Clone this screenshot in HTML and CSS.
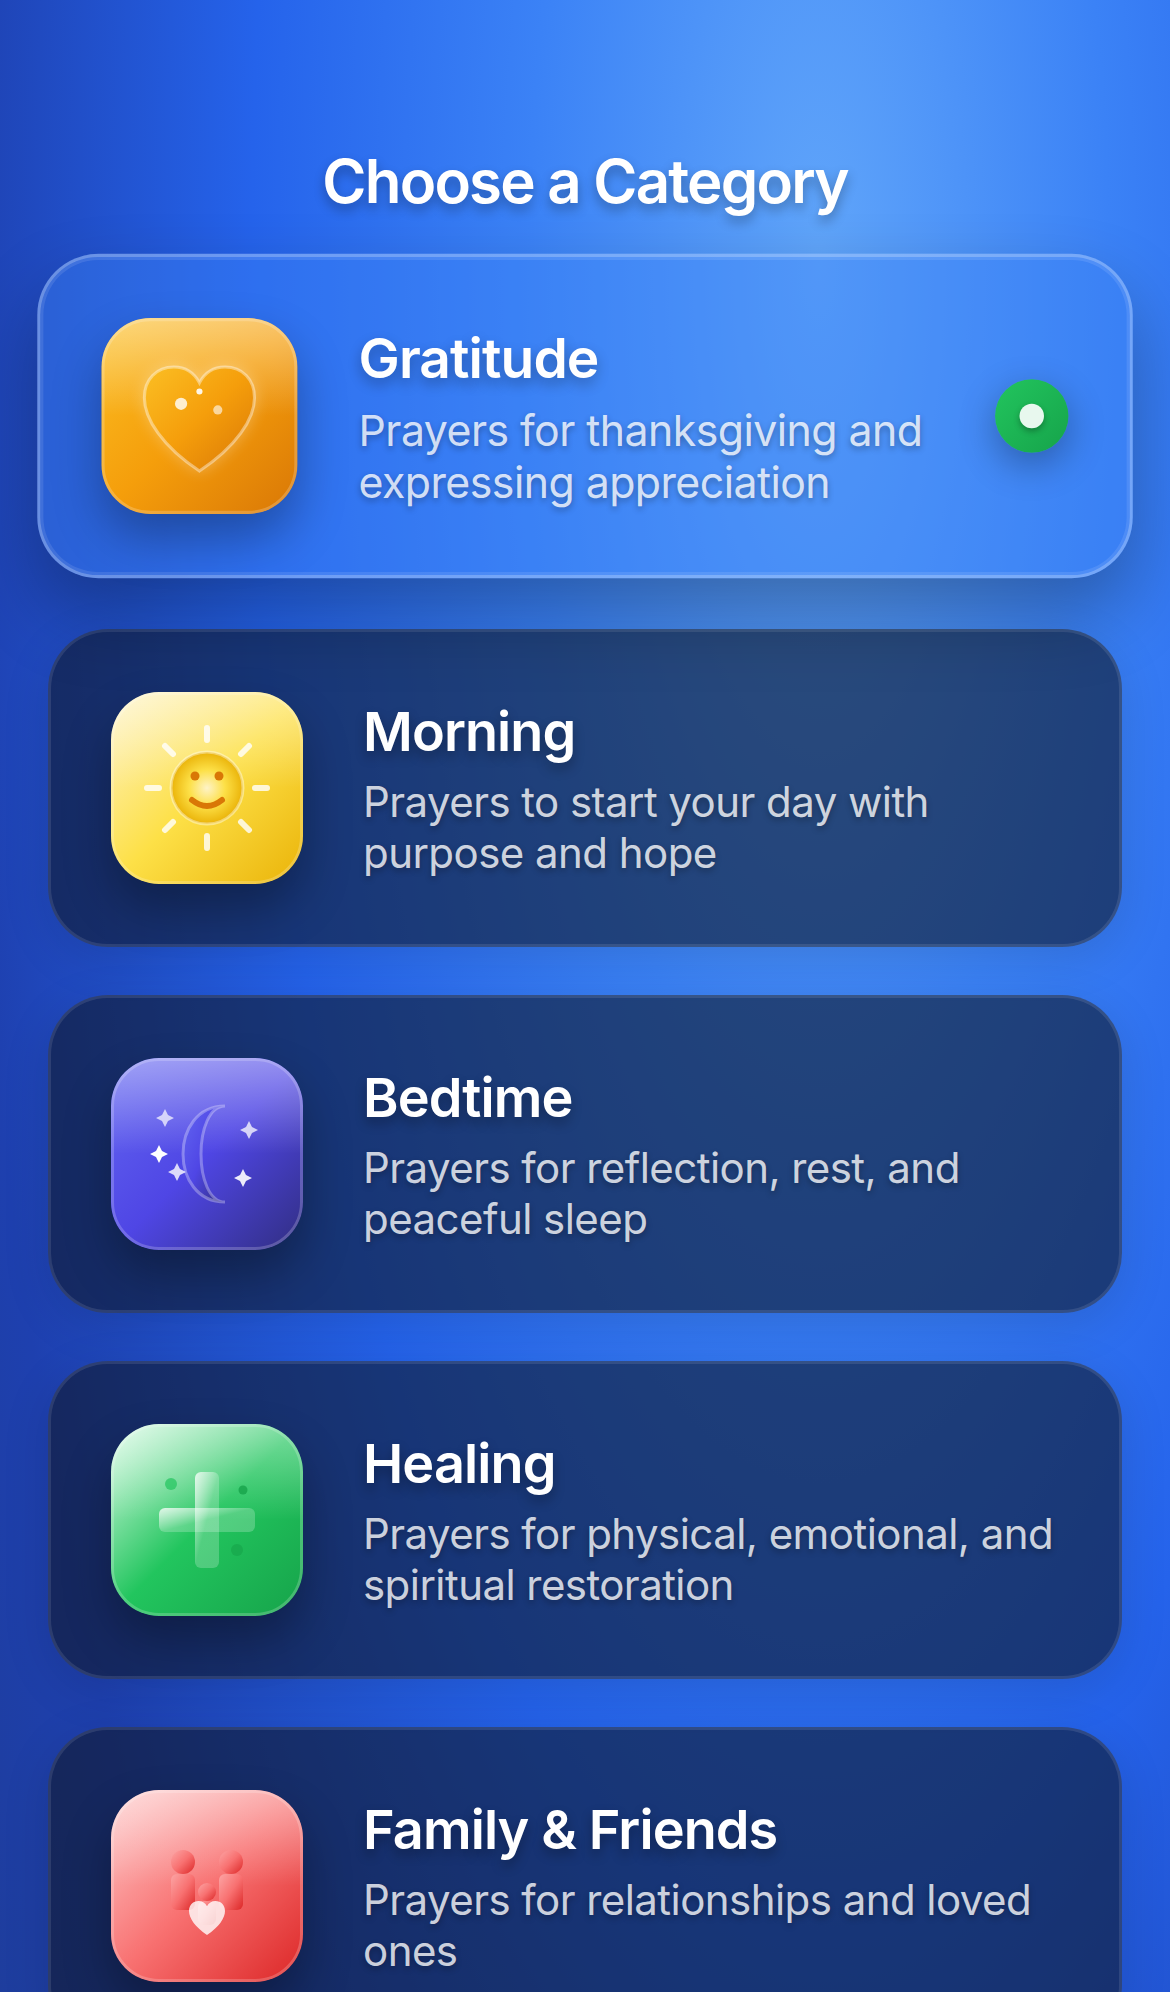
FILE: index.html
```html
<!DOCTYPE html>
<html lang="en">
<head>
<meta charset="utf-8">
<title>Choose a Category</title>
<link rel="stylesheet" href="styles.css">
</head>
<body>
<main class="screen">
  <h1 class="heading">Choose a Category</h1>
  <div class="list">
    <article class="card selected">
      <div class="icon gratitude">
        <svg viewBox="0 0 192 192">
          <defs><linearGradient id="gh" x1="0" y1="0" x2="1" y2="1"><stop offset="0" stop-color="#fbbf24"/><stop offset=".5" stop-color="#f59e0b"/><stop offset="1" stop-color="#d97706"/></linearGradient></defs>
          <path class="glow" fill="url(#gh)" stroke="#fff" stroke-opacity=".4" stroke-width="3" d="M96 150C60 126 42 99 42 78C42 60 54 48 71 48C82 48 91 54 96 63.500C101 54 110 48 121 48C138 48 150 60 150 78C150 99 132 126 96 150Z"/>
          <circle cx="78" cy="84" r="6" fill="#fff" fill-opacity=".8"/><circle cx="114" cy="90" r="4.500" fill="#fff" fill-opacity=".6"/><circle cx="96" cy="72" r="3" fill="#fff" fill-opacity=".9"/>
        </svg>
      </div>
      <div class="copy"><h2>Gratitude</h2><p>Prayers for thanksgiving and expressing appreciation</p></div>
      <span class="check"></span>
    </article>
    <article class="card">
      <div class="icon morning">
        <svg viewBox="0 0 192 192">
          <defs><radialGradient id="sun"><stop offset="0" stop-color="#fef3c7"/><stop offset=".5" stop-color="#fde047"/><stop offset="1" stop-color="#eab308"/></radialGradient></defs>
          <path stroke="#fff" stroke-opacity=".8" stroke-width="6" stroke-linecap="round" d="M96 36V48M96 144V156M36 96H48M144 96H156M54 54L62 62M138 54L130 62M54 138L62 130M138 138L130 130"/>
          <circle cx="96" cy="96" r="36" fill="url(#sun)" stroke="#fff" stroke-opacity=".4" stroke-width="3"/>
          <circle cx="84" cy="84" r="4.500" fill="#d97706"/><circle cx="108" cy="84" r="4.500" fill="#d97706"/>
          <path fill="none" stroke="#d97706" stroke-width="6" stroke-linecap="round" d="M81 108Q96 120 111 108"/>
        </svg>
      </div>
      <div class="copy"><h2>Morning</h2><p>Prayers to start your day with purpose and hope</p></div>
    </article>
    <article class="card">
      <div class="icon bedtime">
        <svg viewBox="0 0 192 192">
          <defs><linearGradient id="moon" x1="0" y1="0" x2="1" y2="1"><stop offset="0" stop-color="#6366f1"/><stop offset=".5" stop-color="#4f46e5"/><stop offset="1" stop-color="#312e81"/></linearGradient><path id="star" d="M0 -9L3 -3L9 0L3 3L0 9L-3 3L-9 0L-3 -3Z"/></defs>
          <path fill="url(#moon)" stroke="#fff" stroke-opacity=".3" stroke-width="3" d="M114 48C58 48 58 144 114 144C82 144 82 48 114 48"/>
          <g fill="#fff"><use href="#star" x="48" y="96"/><use href="#star" x="54" y="60" opacity=".7"/><use href="#star" x="66" y="114" opacity=".8"/><use href="#star" x="138" y="72" opacity=".75"/><use href="#star" x="132" y="120" opacity=".9"/></g>
        </svg>
      </div>
      <div class="copy"><h2>Bedtime</h2><p>Prayers for reflection, rest, and peaceful sleep</p></div>
    </article>
    <article class="card">
      <div class="icon healing">
        <svg viewBox="0 0 192 192">
          <defs><linearGradient id="bar" x1="0" y1="0" x2="1" y2="1"><stop offset="0" stop-color="#fff" stop-opacity=".8"/><stop offset=".5" stop-color="#fff" stop-opacity=".22"/><stop offset="1" stop-color="#fff" stop-opacity=".22"/></linearGradient></defs>
          <rect x="84" y="48" width="24" height="96" rx="6" fill="url(#bar)"/><rect x="48" y="84" width="96" height="24" rx="6" fill="url(#bar)"/>
          <circle cx="60" cy="60" r="6" fill="#22c55e" fill-opacity=".7"/><circle cx="132" cy="66" r="4.500" fill="#16a34a" fill-opacity=".8"/><circle cx="126" cy="126" r="6" fill="#16a34a" fill-opacity=".6"/>
        </svg>
      </div>
      <div class="copy"><h2>Healing</h2><p>Prayers for physical, emotional, and spiritual restoration</p></div>
    </article>
    <article class="card">
      <div class="icon family">
        <svg viewBox="0 0 192 192">
          <defs><linearGradient id="fam" x1="0" y1="0" x2="1" y2="1"><stop offset="0" stop-color="#fca5a5"/><stop offset=".5" stop-color="#f87171"/><stop offset="1" stop-color="#dc2626"/></linearGradient></defs>
          <g fill="url(#fam)"><circle cx="72" cy="72" r="12"/><rect x="60" y="84" width="24" height="36" rx="6"/><circle cx="120" cy="72" r="12"/><rect x="108" y="84" width="24" height="36" rx="6"/><circle cx="96" cy="102" r="9"/><rect x="87" y="111" width="18" height="24" rx="6"/></g>
          <path fill="#fff" fill-opacity=".8" transform="translate(64 95) scale(.33333)" d="M96 150C60 126 42 99 42 78C42 60 54 48 71 48C82 48 91 54 96 63.500C101 54 110 48 121 48C138 48 150 60 150 78C150 99 132 126 96 150Z"/>
        </svg>
      </div>
      <div class="copy"><h2>Family &amp; Friends</h2><p>Prayers for relationships and loved ones</p></div>
    </article>
  </div>
</main>
</body>
</html>
```
FILE: styles.css
```css
* { box-sizing: border-box; margin: 0; }

body {
  height: 1992px;
  overflow: hidden;
  font-family: Inter, "Liberation Sans", sans-serif;
  color: #fff;
}

.screen {
  height: 1992px;
  overflow: hidden;
  padding: 145px 48px 0;
  background: radial-gradient(1158px 3400px at 70% 265px, #60a5fa 0%, #3b82f6 25%, #2563eb 49%, #1e40af 75%, #1e3a8a 100%);
}

.heading {
  font-size: 60px;
  font-weight: 600;
  line-height: 72px;
  letter-spacing: -1.8px;
  text-align: center;
  text-shadow: 0 6px 12px rgba(0, 0, 0, .3);
}

.list {
  display: flex;
  flex-direction: column;
  gap: 48px;
  padding-top: 46px;
}

.card {
  display: flex;
  align-items: center;
  gap: 60px;
  height: 318px;
  flex: none;
  padding: 60px;
  border: 3px solid rgba(255, 255, 255, .1);
  border-radius: 60px;
  background: rgba(15, 23, 42, .6);
  box-shadow: 0 12px 48px rgba(0, 0, 0, .12);
}

.selected {
  background: rgba(59, 130, 246, .4);
  border-color: rgba(255, 255, 255, .3);
  transform: translateY(-6px) scale(1.02);
  box-shadow: 0 36px 72px rgba(0, 0, 0, .3), inset 0 0 0 3px rgba(255, 255, 255, .1);
}

.icon {
  position: relative;
  width: 192px;
  height: 192px;
  flex: none;
  overflow: hidden;
  border-radius: 48px;
  box-shadow: 0 24px 48px rgba(0, 0, 0, .3);
}

.icon::before {
  content: "";
  position: absolute;
  inset: 0 0 50%;
  background: linear-gradient(rgba(255, 255, 255, .4), rgba(255, 255, 255, 0));
}

.icon::after {
  content: "";
  position: absolute;
  inset: 0;
  border: 3px solid rgba(255, 255, 255, .2);
  border-radius: 48px;
}

.icon svg {
  position: relative;
  display: block;
  width: 192px;
  height: 192px;
}

.glow { filter: drop-shadow(0 0 8px rgba(255, 255, 255, .3)); }

.gratitude { background: linear-gradient(135deg, #fbbf24, #f59e0b 50%, #d97706); }
.morning { background: linear-gradient(135deg, #fef3c7, #fde047 50%, #eab308); }
.bedtime { background: linear-gradient(135deg, #6366f1, #4f46e5 50%, #312e81); }
.healing { background: linear-gradient(135deg, #dcfce7, #22c55e 50%, #16a34a); }
.family { background: linear-gradient(135deg, #fecaca, #f87171 50%, #dc2626); }

.copy { flex: 1; }

.copy h2 {
  font-size: 54px;
  font-weight: 600;
  line-height: 65px;
  letter-spacing: -.9px;
  margin-bottom: 12px;
  text-shadow: 0 6px 12px rgba(0, 0, 0, .3);
}

.copy p {
  font-size: 42px;
  font-weight: 400;
  line-height: 51px;
  letter-spacing: -.55px;
  color: rgba(255, 255, 255, .8);
  text-shadow: 0 3px 6px rgba(0, 0, 0, .3);
}

.check {
  display: grid;
  place-items: center;
  width: 72px;
  height: 72px;
  flex: none;
  border-radius: 50%;
  background: linear-gradient(135deg, #22c55e, #16a34a);
  box-shadow: 0 12px 36px rgba(0, 0, 0, .3);
}

.check::before {
  content: "";
  width: 24px;
  height: 24px;
  border-radius: 50%;
  background: rgba(255, 255, 255, .9);
  box-shadow: 0 3px 6px rgba(0, 0, 0, .3);
}
```
